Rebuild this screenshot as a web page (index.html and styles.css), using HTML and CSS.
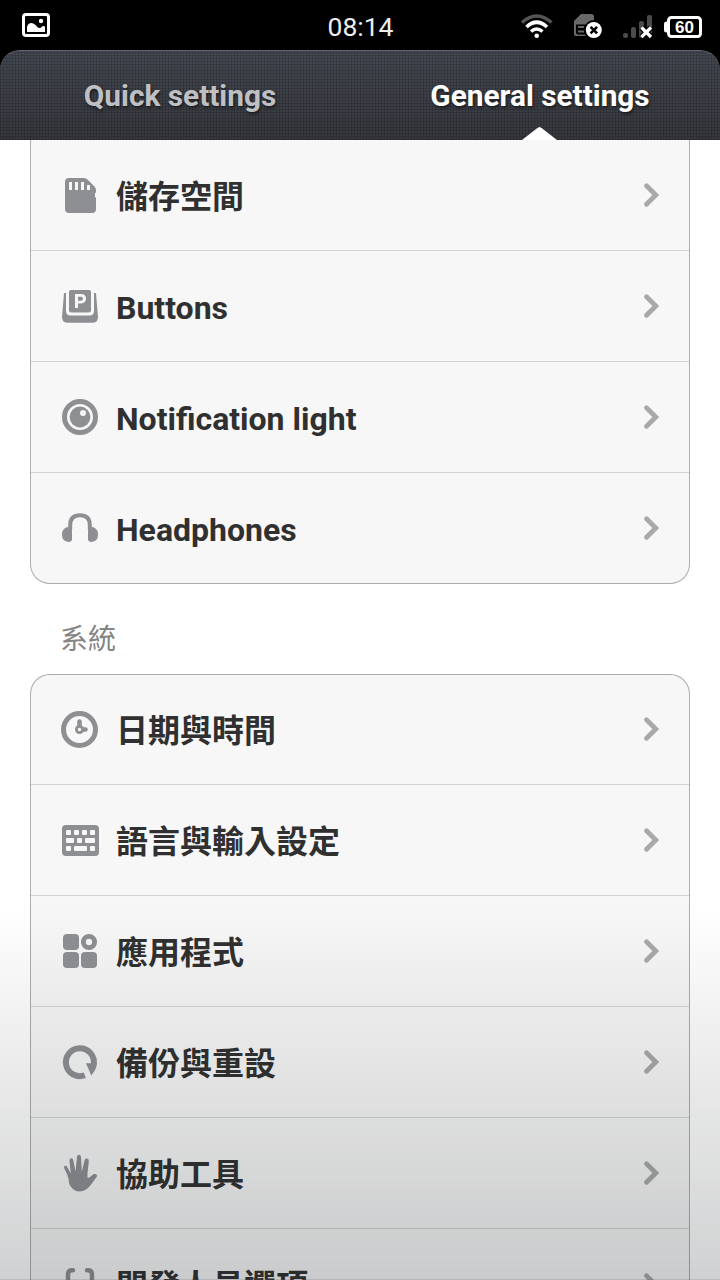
FILE: index.html
```html
<!DOCTYPE html>
<html lang="zh-Hant">
<head>
  <meta charset="UTF-8" />
  <title>General settings</title>
  <meta name="viewport" content="width=device-width, initial-scale=1.0">
  <link rel="stylesheet" href="styles.css">
</head>
<body>

  <!-- shared chevron -->
  <svg class="defs" width="0" height="0">
    <symbol id="chevron" viewBox="0 0 20 28">
      <path d="M5.5 4.7 L14.8 14 L5.5 23.3" fill="none" stroke="currentColor" stroke-width="4.8" stroke-linecap="round"/>
    </symbol>
  </svg>

  <header class="header">
    <div class="statusbar">
      <svg class="notif" width="28" height="24" viewBox="0 0 28 24">
        <rect x="1.5" y="1.5" width="25" height="21" rx="2.5" fill="none" stroke="#fff" stroke-width="3"/>
        <path d="M5 19V14Q6 10 9.500 10Q12 10 14 12.500Q16 15 17.500 15Q19 15 20 13.500Q21.500 12.500 23 13.500V19Z" fill="#fff"/>
        <circle cx="19" cy="8" r="2.200" fill="#fff"/>
      </svg>
      <div class="clock">08:14</div>
      <svg class="status-icons" width="184" height="30" viewBox="520 12 184 30">
        <!-- wifi -->
        <g fill="none" stroke-width="3.600">
          <path d="M522 22.500Q536.600 9.500 551.500 22.500" stroke="#555"/>
          <path d="M526.500 27Q536.600 17.500 547 27" stroke="#fff"/>
          <path d="M531 31.500Q536.600 26.500 542.500 31.500" stroke="#fff"/>
        </g>
        <circle cx="536.700" cy="35.800" r="2.300" fill="#fff"/>
        <!-- sim -->
        <path d="M574 34V21L581 14H591Q594 14 594 17V36H577Q574 36 574 34Z" fill="#686868"/>
        <path d="M576 24.500h12v10h-10q-2 0-2-2z" fill="#000"/>
        <path d="M578 26h6v2h-6zM578 30.500h6v2h-6z" fill="#686868"/>
        <circle cx="593.800" cy="30" r="10" fill="#000"/>
        <circle cx="593.800" cy="30" r="8" fill="#fff"/>
        <path d="M590.600 26.800l6.500 6.500M597.100 26.800l-6.500 6.500" stroke="#000" stroke-width="2.600"/>
        <!-- signal -->
        <g fill="#4b4b4b">
          <rect x="623" y="33" width="5" height="5" rx="2"/>
          <rect x="631" y="27" width="5" height="11" rx="2"/>
          <rect x="639" y="21" width="5" height="17" rx="2"/>
          <rect x="647" y="15" width="5" height="23" rx="2"/>
        </g>
        <path d="M641.500 27.500l9.500 9.500M651 27.500l-9.500 9.500" stroke="#000" stroke-width="6"/>
        <path d="M641.500 27.500l9.500 9.500M651 27.500l-9.500 9.500" stroke="#fff" stroke-width="3.200"/>
        <!-- battery -->
        <rect x="664" y="21.500" width="5" height="11" rx="2.500" fill="#fff"/>
        <rect x="668.500" y="17.500" width="32" height="19" rx="3" fill="#000" stroke="#fff" stroke-width="3"/>
        <text class="battery-text" x="684.500" y="33" text-anchor="middle">60</text>
      </svg>
    </div>

    <div class="tabs">
      <div class="tab">Quick settings</div>
      <div class="tab active">General settings</div>
    </div>
  </header>

  <div class="group group-first">
    <div class="row">
      <svg class="icon" viewBox="0 0 40 40">
        <path fill="currentColor" fill-rule="evenodd" d="M9 3H24Q26 3 27.500 4.500L34.500 11.500Q36 13 36 15V17.500L35 18V22L36 23V34Q36 38 32 38H9Q5 38 5 34V7Q5 3 9 3ZM9 7V15H12V7ZM15 7V15H18V7ZM21 7V15H24V7ZM27 10V15H30V10Z"/>
      </svg>
      <div class="label">儲存空間</div>
      <svg class="arrow"><use href="#chevron"/></svg>
    </div>
    <div class="row">
      <svg class="icon" viewBox="0 0 40 40">
        <path fill="currentColor" fill-rule="evenodd" d="M11 4H29Q31 4 31 6V24Q31 26.500 28.500 26.500H11.500Q9 26.500 9 24V6Q9 4 11 4ZM15 8V22H18V17.500H21Q26 17 26 12.800Q26 8 21 8ZM18 10.800H21Q23 11 23 12.800Q23 14.700 21 14.700H18Z"/>
        <path fill="currentColor" d="M4 7H6V25Q6 29.500 10.500 29.500H29.500Q34 29.500 34 25V7H36L38 31Q38 36.700 33 36.700H7Q2 36.700 2 31Z"/>
      </svg>
      <div class="label">Buttons</div>
      <svg class="arrow"><use href="#chevron"/></svg>
    </div>
    <div class="row">
      <svg class="icon" viewBox="0 0 40 40">
        <circle cx="20" cy="20" r="15.500" fill="none" stroke="currentColor" stroke-width="5"/>
        <circle cx="20" cy="20" r="10.400" fill="currentColor"/>
        <circle cx="23" cy="16" r="3" fill="#f7f7f7"/>
      </svg>
      <div class="label">Notification light</div>
      <svg class="arrow"><use href="#chevron"/></svg>
    </div>
    <div class="row">
      <svg class="icon" viewBox="0 0 40 40">
        <path fill="none" stroke="currentColor" stroke-width="4" d="M10.200 21V17Q10.200 7.200 20 7.200T29.800 17V21"/>
        <path fill="currentColor" d="M8 19H12V32Q11.500 34 8.500 34Q2 33.500 2 26.500Q2 20 8 19ZM32 19H28V32Q28.500 34 31.500 34Q38 33.500 38 26.500Q38 20 32 19Z"/>
      </svg>
      <div class="label">Headphones</div>
      <svg class="arrow"><use href="#chevron"/></svg>
    </div>
  </div>

  <div class="section-title">系統</div>

  <div class="group group-system">
    <div class="row">
      <svg class="icon" viewBox="0 0 40 40">
        <circle cx="19.500" cy="20.500" r="16" fill="none" stroke="currentColor" stroke-width="5"/>
        <path d="M19.500 12.500V20.500H25.500" fill="none" stroke="currentColor" stroke-width="4.600" stroke-linecap="round"/>
        <circle cx="19.500" cy="20.500" r="4.500" fill="currentColor"/>
        <circle cx="19.500" cy="20.500" r="1.700" fill="#f7f7f7"/>
      </svg>
      <div class="label">日期與時間</div>
      <svg class="arrow"><use href="#chevron"/></svg>
    </div>
    <div class="row">
      <svg class="icon" viewBox="0 0 40 40">
        <rect x="2" y="5" width="37" height="31" rx="4" fill="currentColor"/>
        <g fill="#f7f7f7">
          <rect x="6" y="10" width="5" height="5" rx="1"/>
          <rect x="14" y="10" width="5" height="5" rx="1"/>
          <rect x="22" y="10" width="5" height="5" rx="1"/>
          <rect x="30" y="10" width="5" height="5" rx="1"/>
          <rect x="6" y="18" width="8" height="5" rx="1"/>
          <rect x="17" y="18" width="5" height="5" rx="1"/>
          <rect x="25" y="18" width="10" height="5" rx="1"/>
          <rect x="6" y="26" width="5" height="5" rx="1"/>
          <rect x="14" y="26" width="13" height="5" rx="1"/>
          <rect x="30" y="26" width="5" height="5" rx="1"/>
        </g>
      </svg>
      <div class="label">語言與輸入設定</div>
      <svg class="arrow"><use href="#chevron"/></svg>
    </div>
    <div class="row">
      <svg class="icon" viewBox="0 0 40 40">
        <g fill="currentColor">
          <rect x="3" y="3" width="16" height="16" rx="4"/>
          <rect x="3" y="21" width="16" height="16" rx="4"/>
          <rect x="21" y="21" width="16" height="16" rx="4"/>
        </g>
        <circle cx="29" cy="11" r="5.600" fill="none" stroke="currentColor" stroke-width="4.900"/>
      </svg>
      <div class="label">應用程式</div>
      <svg class="arrow"><use href="#chevron"/></svg>
    </div>
    <div class="row">
      <svg class="icon" viewBox="0 0 40 40">
        <path d="M24.800 33.300A14 14 0 1 1 33.700 22.500" fill="none" stroke="currentColor" stroke-width="6"/>
        <path d="M26 21.200H37Q36.500 26 34.500 29L31.300 33.500Z" fill="currentColor"/>
      </svg>
      <div class="label">備份與重設</div>
      <svg class="arrow"><use href="#chevron"/></svg>
    </div>
    <div class="row">
      <svg class="icon" viewBox="0 0 40 40">
        <path fill="currentColor" d="M8.800 28C8.500 22 4.500 17 4 14.500C4 12.500 6.200 12 7.200 14L10.800 20.500L9.500 8C9.500 4.500 12.800 4.500 13.300 7.500L15.500 18.500L17 4C17.500 1 20.500 1 21 4L21.800 18.500L24.500 7.500C25.500 4.500 29 5 28.800 8.500L27.500 20V25C30 24.500 31.500 22.500 33 21.500C35.500 20.300 37.500 21.500 37 23.500C34 27 32 31 28.500 34.500C24 39 17 39.500 13.500 36.500C10.500 34 9 31.500 8.800 28Z"/>
      </svg>
      <div class="label">協助工具</div>
      <svg class="arrow"><use href="#chevron"/></svg>
    </div>
    <div class="row">
      <svg class="icon" viewBox="0 0 40 40">
        <path d="M13 5.200H12Q8 5.200 8 9.500V16Q8 20 5 20Q8 20 8 24V30.500Q8 34.800 12 34.800H13M27 5.200H28Q32 5.200 32 9.500V16Q32 20 35 20Q32 20 32 24V30.500Q32 34.800 28 34.800H27" fill="none" stroke="currentColor" stroke-width="4.400" stroke-linecap="round"/>
      </svg>
      <div class="label">開發人員選項</div>
      <svg class="arrow"><use href="#chevron"/></svg>
    </div>
  </div>

  <div class="fade"></div>

</body>
</html>
```

FILE: styles.css
```css
* {
  box-sizing: border-box;
}
body {
  position: relative;
  margin: 0;
  height: 1280px;
  overflow: hidden;
  background: #fff;
  font-family: Roboto, "Noto Sans CJK TC", sans-serif;
}
.defs {
  display: block;
}
.header {
  background: #000;
}
.statusbar {
  display: grid;
  grid-template-columns: 1fr auto 1fr;
  align-items: start;
  height: 50px;
  padding: 12px 16px 0 17px;
}
.notif {
  margin: 1px 0 0 5px;
}
.clock {
  font-size: 26.5px;
  line-height: 30px;
  color: #eee;
}
.status-icons {
  justify-self: end;
}
.battery-text {
  font-family: "Liberation Sans", sans-serif;
  font-size: 17px;
  font-weight: bold;
  fill: #fff;
}
.tabs {
  display: flex;
  height: 90px;
  border-top: 1px solid #63666b;
  border-radius: 20px 20px 0 0;
  background:
    repeating-linear-gradient(0deg, rgba(0, 0, 0, 0.14) 0 1px, transparent 1px 3px),
    repeating-linear-gradient(90deg, rgba(0, 0, 0, 0.14) 0 1px, transparent 1px 3px),
    linear-gradient(#434750, #35373c);
}
.tab {
  flex: 1;
  position: relative;
  font-size: 29.8px;
  font-weight: bold;
  line-height: 90px;
  text-align: center;
  color: #bfc0c3;
  text-shadow: 1px 2px 3px rgba(0, 0, 0, 0.5);
}
.tab.active {
  color: #fff;
}
.tab.active::after {
  content: "";
  position: absolute;
  left: 162px;
  bottom: 0;
  width: 35px;
  height: 13px;
  background: #fff;
  clip-path: polygon(0 100%, 44% 8%, 50% 0, 56% 8%, 100% 100%);
}
.group {
  margin: 0 30px;
  background: #f7f7f7;
  border: 1px solid #acacac;
}
.group-first {
  border-top: 0;
  border-radius: 0 0 20px 20px;
}
.group-system {
  border-radius: 20px 20px 0 0;
  border-bottom: 0;
}
.row {
  display: flex;
  align-items: center;
  height: 111px;
  padding: 0 28px 0 29px;
  border-bottom: 1px solid #d3d3d3;
}
.row:last-child {
  border-bottom: 0;
}
.group-first .row:last-child,
.group-system .row:first-child {
  height: 110px;
}
.group-system .row:first-child {
  padding-bottom: 1px;
}
.icon {
  width: 40px;
  height: 40px;
  color: #8e8f93;
}
.label {
  flex: 1;
  margin-left: 16px;
  padding-top: 3px;
  font-size: 32px;
  font-weight: bold;
  line-height: 48px;
  color: #303030;
}
.arrow {
  width: 20px;
  height: 28px;
  color: #a9a9a9;
}
.section-title {
  height: 90px;
  padding-left: 60px;
  font-size: 28px;
  line-height: 112px;
  color: #858585;
}
/* dark gradient over the bottom of the list */
.fade {
  position: absolute;
  left: 0;
  right: 0;
  bottom: 0;
  height: 375px;
  border-bottom: 1px solid rgba(60, 60, 60, 0.35);
  background: linear-gradient(rgba(20, 25, 30, 0), rgba(20, 25, 30, 0.2));
}
```
